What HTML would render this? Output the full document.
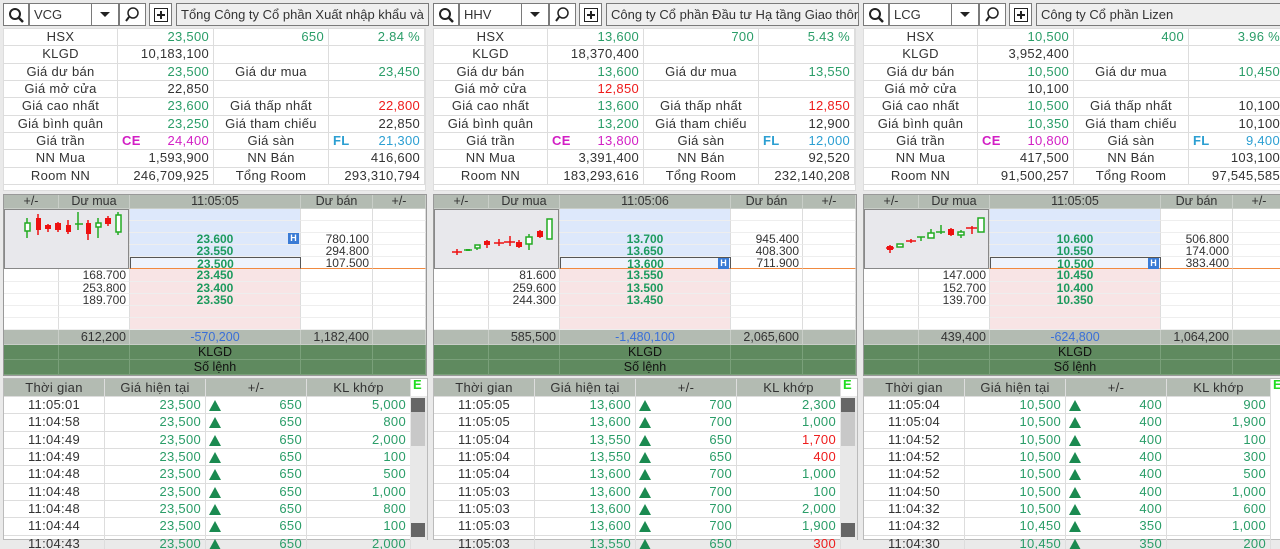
<!DOCTYPE html>
<html><head><meta charset="utf-8"><style>
*{box-sizing:border-box;margin:0;padding:0}
body{width:1280px;height:549px;overflow:hidden;background:#eaeaea;font-family:"Liberation Sans",sans-serif;font-size:13px;color:#333;position:relative}
.p{position:absolute;top:0;width:430px;height:549px;overflow:hidden}
.tb{position:absolute;top:3px;left:3px;height:23px;width:426px}
.tb>div{position:absolute;top:0;height:23px;border:1px solid #7a7a7a;background:#fff}
.tb svg{display:block;margin:3px auto 0}
.info{position:absolute;left:3px;top:28px;width:423px;height:163px;background:#fff;border:1px solid #ddd;display:grid;grid-template-columns:114px 96px 115px 96px;grid-template-rows:repeat(9,17.33px);align-content:start}
.info div{border-right:1px solid #ddd;border-bottom:1px solid #ddd;line-height:16px;padding:0 4px;white-space:nowrap;overflow:hidden;font-size:13px;letter-spacing:.3px}
.c{text-align:center}.r{text-align:right}
.g{color:#2a9d68}.rd{color:#ee1c1c}.m{color:#d21fc4}.b{color:#2c9fd2}
.ob{position:absolute;left:3px;top:194px;width:424px;height:182px;background:#fff;border:1px solid #999;display:grid;grid-template-columns:55px 71px 171px 72px 53px;grid-template-rows:14px repeat(10,12.1px) 15px 15px 15px}
.ob div{border-right:1px solid #ddd;border-bottom:1px solid #eee;line-height:12px;padding:0 3px;white-space:nowrap;font-size:12px}
.ob .h{background:#b3bbb2;text-align:center;border-color:#c9cec8;line-height:13px;font-size:12.5px}
.ob .t{background:#b3bbb2;text-align:right;line-height:15px;border-color:#c9cec8;font-size:12.5px}
.ob .k{background:#5f8a5f;text-align:center;line-height:15px;color:#111;border-color:#7aa07a;font-size:12.5px}
.sp{background:#dde8fb;text-align:center;font-weight:bold;color:#1d9a5e}
.bp{background:#f8e4e5;text-align:center;font-weight:bold;color:#1d9a5e}
.ol{border-bottom:1px solid #f08a40 !important}
.hb{position:absolute;right:1px;top:0;width:11px;height:11px;background:#3a7bd5;color:#fff;font-size:9px;line-height:11px;text-align:center;font-weight:bold}
.tr{position:absolute;left:3px;top:378px;width:425px;height:162px;background:#fff;border:1px solid #bbb;display:grid;grid-template-columns:101px 101px 101px 104px;grid-template-rows:18px repeat(9,17.33px)}
.tr div{border-right:1px solid #ddd;border-bottom:1px solid #ddd;line-height:16px;padding:0 4px;white-space:nowrap;overflow:hidden;font-size:13px;letter-spacing:.3px}
.tr .h{background:#b3bbb2;text-align:center;line-height:17px}
.ar{position:relative}
.ar:before{content:"";position:absolute;left:3px;top:3px;border-left:6px solid transparent;border-right:6px solid transparent;border-bottom:11px solid #1a8a50}
.sb{position:absolute;left:410px;top:396px;width:17px;height:144px;background:#e8e8e8}
.sb .u{position:absolute;left:1px;top:2px;width:14px;height:14px;background:#666}
.sb .d{position:absolute;left:1px;bottom:3px;width:14px;height:14px;background:#666}
.sb .th{position:absolute;left:1px;top:16px;width:14px;height:34px;background:#c8c8c8}
.E{position:absolute;left:413px;top:377px;color:#22dd22;font-weight:bold;font-size:13px}
.ch{position:absolute;left:4px;top:209px;width:125px;height:60px;background:#e8e8ec;border:1px solid #888}
</style></head><body>

<!-- PANEL 1 -->
<div class="p" style="left:0">
<div class="tb">
<div style="left:0;width:26px"><svg width="16" height="16"><circle cx="7" cy="7" r="5" fill="none" stroke="#222" stroke-width="2"/><line x1="10.5" y1="10.5" x2="15" y2="15" stroke="#222" stroke-width="2.5"/></svg></div>
<div style="left:26px;width:63px;padding-left:4px;line-height:21px">VCG</div>
<div style="left:88px;width:28px"><svg width="14" height="14"><polygon points="2,5 12,5 7,10" fill="#222"/></svg></div>
<div style="left:116px;width:27px"><svg width="16" height="16"><circle cx="8" cy="6" r="5" fill="none" stroke="#222" stroke-width="1.5"/><line x1="4" y1="10" x2="1" y2="14" stroke="#222" stroke-width="2"/></svg></div>
<div style="left:146px;width:23px"><svg width="16" height="16"><rect x="1.5" y="1.5" width="13" height="13" fill="none" stroke="#222"/><line x1="8" y1="4" x2="8" y2="12" stroke="#222" stroke-width="2"/><line x1="4" y1="8" x2="12" y2="8" stroke="#222" stroke-width="2"/></svg></div>
<div style="left:173px;width:253px;background:#efefef;padding-left:4px;line-height:21px;white-space:nowrap;overflow:hidden">Tổng Công ty Cổ phần Xuất nhập khẩu và Xây dựng Việt Nam</div>
</div>
<div class="info">
<div class="c">HSX</div><div class="r g">23,500</div><div class="r g">650</div><div class="r g">2.84 %</div>
<div class="c">KLGD</div><div class="r">10,183,100</div><div></div><div></div>
<div class="c">Giá dư bán</div><div class="r g">23,500</div><div class="c">Giá dư mua</div><div class="r g">23,450</div>
<div class="c">Giá mở cửa</div><div class="r">22,850</div><div></div><div></div>
<div class="c">Giá cao nhất</div><div class="r g">23,600</div><div class="c">Giá thấp nhất</div><div class="r rd">22,800</div>
<div class="c">Giá bình quân</div><div class="r g">23,250</div><div class="c">Giá tham chiếu</div><div class="r">22,850</div>
<div class="c">Giá trần</div><div class="r m"><b style="float:left">CE</b>24,400</div><div class="c">Giá sàn</div><div class="r b"><b style="float:left">FL</b>21,300</div>
<div class="c">NN Mua</div><div class="r">1,593,900</div><div class="c">NN Bán</div><div class="r">416,600</div>
<div class="c">Room NN</div><div class="r">246,709,925</div><div class="c">Tổng Room</div><div class="r">293,310,794</div>
</div>
<div class="ob">
<div class="h">+/-</div><div class="h">Dư mua</div><div class="h">11:05:05</div><div class="h">Dư bán</div><div class="h">+/-</div>
<div></div><div></div><div class="sp"></div><div></div><div></div>
<div></div><div></div><div class="sp"></div><div></div><div></div>
<div></div><div></div><div class="sp" style="position:relative">23.600<span class="hb">H</span></div><div class="r">780.100</div><div></div>
<div></div><div></div><div class="sp">23.550</div><div class="r">294.800</div><div></div>
<div class="ol"></div><div class="ol"></div><div class="sp ol" style="border:1px solid #555;background:#eef3fc">23.500</div><div class="r ol">107.500</div><div class="ol"></div>
<div></div><div class="r">168.700</div><div class="bp">23.450</div><div></div><div></div>
<div></div><div class="r">253.800</div><div class="bp">23.400</div><div></div><div></div>
<div></div><div class="r">189.700</div><div class="bp">23.350</div><div></div><div></div>
<div></div><div></div><div class="bp"></div><div></div><div></div>
<div></div><div></div><div class="bp"></div><div></div><div></div>
<div class="t"></div><div class="t">612,200</div><div class="t" style="text-align:center;color:#3a6fd8">-570,200</div><div class="t">1,182,400</div><div class="t"></div>
<div class="k"></div><div class="k"></div><div class="k">KLGD</div><div class="k"></div><div class="k"></div>
<div class="k"></div><div class="k"></div><div class="k">Số lệnh</div><div class="k"></div><div class="k"></div>
</div>
<div class="ch"><svg width="125" height="60"><g stroke-width="1.5">
<line x1="22" y1="8" x2="22" y2="28" stroke="#2a2"/><rect x="20" y="13" width="5" height="8" fill="#fff" stroke="#2a2"/>
<line x1="33" y1="4" x2="33" y2="25" stroke="#e11"/><rect x="31" y="8" width="5" height="12" fill="#e11"/>
<line x1="43" y1="14" x2="43" y2="22" stroke="#e11"/><rect x="40" y="15" width="6" height="4" fill="#e11"/>
<line x1="53" y1="12" x2="53" y2="22" stroke="#e11"/><rect x="50" y="13" width="6" height="7" fill="#e11"/>
<line x1="63" y1="10" x2="63" y2="24" stroke="#e11"/><rect x="61" y="15" width="5" height="7" fill="#e11"/>
<line x1="73" y1="2" x2="73" y2="20" stroke="#2a2"/><line x1="70" y1="14" x2="78" y2="14" stroke="#2a2"/>
<line x1="83" y1="10" x2="83" y2="30" stroke="#e11"/><rect x="81" y="13" width="5" height="11" fill="#e11"/>
<line x1="93" y1="8" x2="93" y2="28" stroke="#2a2"/><rect x="91" y="13" width="5" height="4" fill="#fff" stroke="#2a2"/>
<line x1="103" y1="6" x2="103" y2="16" stroke="#e11"/><rect x="100" y="8" width="6" height="6" fill="#e11"/>
<line x1="113" y1="2" x2="113" y2="25" stroke="#2a2"/><rect x="111" y="5" width="5" height="17" fill="#fff" stroke="#2a2"/>
</g></svg></div>
<div class="tr">
<div class="h">Thời gian</div><div class="h">Giá hiện tại</div><div class="h">+/-</div><div class="h">KL khớp</div>
<div class="c">11:05:01</div><div class="r g">23,500</div><div class="r g ar">650</div><div class="r g">5,000</div>
<div class="c">11:04:58</div><div class="r g">23,500</div><div class="r g ar">650</div><div class="r g">800</div>
<div class="c">11:04:49</div><div class="r g">23,500</div><div class="r g ar">650</div><div class="r g">2,000</div>
<div class="c">11:04:49</div><div class="r g">23,500</div><div class="r g ar">650</div><div class="r g">100</div>
<div class="c">11:04:48</div><div class="r g">23,500</div><div class="r g ar">650</div><div class="r g">500</div>
<div class="c">11:04:48</div><div class="r g">23,500</div><div class="r g ar">650</div><div class="r g">1,000</div>
<div class="c">11:04:48</div><div class="r g">23,500</div><div class="r g ar">650</div><div class="r g">800</div>
<div class="c">11:04:44</div><div class="r g">23,500</div><div class="r g ar">650</div><div class="r g">100</div>
<div class="c">11:04:43</div><div class="r g">23,500</div><div class="r g ar">650</div><div class="r g">2,000</div>
</div>
<div class="E">E</div>
<div class="sb"><div class="u"></div><div class="th"></div><div class="d"></div></div>
</div>

<!-- PANEL 2 -->
<div class="p" style="left:430px">
<div class="tb">
<div style="left:0;width:26px"><svg width="16" height="16"><circle cx="7" cy="7" r="5" fill="none" stroke="#222" stroke-width="2"/><line x1="10.5" y1="10.5" x2="15" y2="15" stroke="#222" stroke-width="2.5"/></svg></div>
<div style="left:26px;width:63px;padding-left:4px;line-height:21px">HHV</div>
<div style="left:88px;width:28px"><svg width="14" height="14"><polygon points="2,5 12,5 7,10" fill="#222"/></svg></div>
<div style="left:116px;width:27px"><svg width="16" height="16"><circle cx="8" cy="6" r="5" fill="none" stroke="#222" stroke-width="1.5"/><line x1="4" y1="10" x2="1" y2="14" stroke="#222" stroke-width="2"/></svg></div>
<div style="left:146px;width:23px"><svg width="16" height="16"><rect x="1.5" y="1.5" width="13" height="13" fill="none" stroke="#222"/><line x1="8" y1="4" x2="8" y2="12" stroke="#222" stroke-width="2"/><line x1="4" y1="8" x2="12" y2="8" stroke="#222" stroke-width="2"/></svg></div>
<div style="left:173px;width:253px;background:#efefef;padding-left:4px;line-height:21px;white-space:nowrap;overflow:hidden">Công ty Cổ phần Đầu tư Hạ tầng Giao thông Đèo Cả</div>
</div>
<div class="info">
<div class="c">HSX</div><div class="r g">13,600</div><div class="r g">700</div><div class="r g">5.43 %</div>
<div class="c">KLGD</div><div class="r">18,370,400</div><div></div><div></div>
<div class="c">Giá dư bán</div><div class="r g">13,600</div><div class="c">Giá dư mua</div><div class="r g">13,550</div>
<div class="c">Giá mở cửa</div><div class="r rd">12,850</div><div></div><div></div>
<div class="c">Giá cao nhất</div><div class="r g">13,600</div><div class="c">Giá thấp nhất</div><div class="r rd">12,850</div>
<div class="c">Giá bình quân</div><div class="r g">13,200</div><div class="c">Giá tham chiếu</div><div class="r">12,900</div>
<div class="c">Giá trần</div><div class="r m"><b style="float:left">CE</b>13,800</div><div class="c">Giá sàn</div><div class="r b"><b style="float:left">FL</b>12,000</div>
<div class="c">NN Mua</div><div class="r">3,391,400</div><div class="c">NN Bán</div><div class="r">92,520</div>
<div class="c">Room NN</div><div class="r">183,293,616</div><div class="c">Tổng Room</div><div class="r">232,140,208</div>
</div>
<div class="ob">
<div class="h">+/-</div><div class="h">Dư mua</div><div class="h">11:05:06</div><div class="h">Dư bán</div><div class="h">+/-</div>
<div></div><div></div><div class="sp"></div><div></div><div></div>
<div></div><div></div><div class="sp"></div><div></div><div></div>
<div></div><div></div><div class="sp">13.700</div><div class="r">945.400</div><div></div>
<div></div><div></div><div class="sp">13.650</div><div class="r">408.300</div><div></div>
<div class="ol"></div><div class="ol"></div><div class="sp ol" style="border:1px solid #555;background:#eef3fc;position:relative">13.600<span class="hb">H</span></div><div class="r ol">711.900</div><div class="ol"></div>
<div></div><div class="r">81.600</div><div class="bp">13.550</div><div></div><div></div>
<div></div><div class="r">259.600</div><div class="bp">13.500</div><div></div><div></div>
<div></div><div class="r">244.300</div><div class="bp">13.450</div><div></div><div></div>
<div></div><div></div><div class="bp"></div><div></div><div></div>
<div></div><div></div><div class="bp"></div><div></div><div></div>
<div class="t"></div><div class="t">585,500</div><div class="t" style="text-align:center;color:#3a6fd8">-1,480,100</div><div class="t">2,065,600</div><div class="t"></div>
<div class="k"></div><div class="k"></div><div class="k">KLGD</div><div class="k"></div><div class="k"></div>
<div class="k"></div><div class="k"></div><div class="k">Số lệnh</div><div class="k"></div><div class="k"></div>
</div>
<div class="ch"><svg width="125" height="60"><g stroke-width="1.5">
<line x1="17" y1="42" x2="27" y2="42" stroke="#e11"/><line x1="22" y1="39" x2="22" y2="45" stroke="#e11"/>
<line x1="29" y1="40" x2="37" y2="40" stroke="#2a2"/><rect x="31" y="39" width="4" height="2" fill="#2a2"/>
<rect x="40" y="35" width="5" height="3" fill="#fff" stroke="#2a2"/><line x1="42" y1="38" x2="42" y2="40" stroke="#2a2"/>
<line x1="52" y1="30" x2="52" y2="38" stroke="#e11"/><rect x="49" y="31" width="6" height="4" fill="#e11"/>
<line x1="59" y1="33" x2="69" y2="33" stroke="#e11"/><line x1="64" y1="29" x2="64" y2="36" stroke="#e11"/>
<line x1="69" y1="32" x2="80" y2="32" stroke="#e11"/><line x1="75" y1="26" x2="75" y2="36" stroke="#e11"/>
<line x1="84" y1="30" x2="84" y2="38" stroke="#e11"/><rect x="81" y="32" width="6" height="5" fill="#e11"/>
<line x1="94" y1="24" x2="94" y2="40" stroke="#2a2"/><rect x="91" y="27" width="6" height="7" fill="#fff" stroke="#2a2"/>
<line x1="105" y1="20" x2="105" y2="28" stroke="#e11"/><rect x="102" y="21" width="6" height="6" fill="#e11"/>
<rect x="112" y="9" width="5" height="20" fill="#fff" stroke="#2a2"/>
</g></svg></div>
<div class="tr">
<div class="h">Thời gian</div><div class="h">Giá hiện tại</div><div class="h">+/-</div><div class="h">KL khớp</div>
<div class="c">11:05:05</div><div class="r g">13,600</div><div class="r g ar">700</div><div class="r g">2,300</div>
<div class="c">11:05:05</div><div class="r g">13,600</div><div class="r g ar">700</div><div class="r g">1,000</div>
<div class="c">11:05:04</div><div class="r g">13,550</div><div class="r g ar">650</div><div class="r rd">1,700</div>
<div class="c">11:05:04</div><div class="r g">13,550</div><div class="r g ar">650</div><div class="r rd">400</div>
<div class="c">11:05:04</div><div class="r g">13,600</div><div class="r g ar">700</div><div class="r g">1,000</div>
<div class="c">11:05:03</div><div class="r g">13,600</div><div class="r g ar">700</div><div class="r g">100</div>
<div class="c">11:05:03</div><div class="r g">13,600</div><div class="r g ar">700</div><div class="r g">2,000</div>
<div class="c">11:05:03</div><div class="r g">13,600</div><div class="r g ar">700</div><div class="r g">1,900</div>
<div class="c">11:05:03</div><div class="r g">13,550</div><div class="r g ar">650</div><div class="r rd">300</div>
</div>
<div class="E">E</div>
<div class="sb"><div class="u"></div><div class="th"></div><div class="d"></div></div>
</div>

<!-- PANEL 3 -->
<div class="p" style="left:860px">
<div class="tb">
<div style="left:0;width:26px"><svg width="16" height="16"><circle cx="7" cy="7" r="5" fill="none" stroke="#222" stroke-width="2"/><line x1="10.5" y1="10.5" x2="15" y2="15" stroke="#222" stroke-width="2.5"/></svg></div>
<div style="left:26px;width:63px;padding-left:4px;line-height:21px">LCG</div>
<div style="left:88px;width:28px"><svg width="14" height="14"><polygon points="2,5 12,5 7,10" fill="#222"/></svg></div>
<div style="left:116px;width:27px"><svg width="16" height="16"><circle cx="8" cy="6" r="5" fill="none" stroke="#222" stroke-width="1.5"/><line x1="4" y1="10" x2="1" y2="14" stroke="#222" stroke-width="2"/></svg></div>
<div style="left:146px;width:23px"><svg width="16" height="16"><rect x="1.5" y="1.5" width="13" height="13" fill="none" stroke="#222"/><line x1="8" y1="4" x2="8" y2="12" stroke="#222" stroke-width="2"/><line x1="4" y1="8" x2="12" y2="8" stroke="#222" stroke-width="2"/></svg></div>
<div style="left:173px;width:253px;background:#efefef;padding-left:4px;line-height:21px;white-space:nowrap;overflow:hidden">Công ty Cổ phần Lizen</div>
</div>
<div class="info">
<div class="c">HSX</div><div class="r g">10,500</div><div class="r g">400</div><div class="r g">3.96 %</div>
<div class="c">KLGD</div><div class="r">3,952,400</div><div></div><div></div>
<div class="c">Giá dư bán</div><div class="r g">10,500</div><div class="c">Giá dư mua</div><div class="r g">10,450</div>
<div class="c">Giá mở cửa</div><div class="r">10,100</div><div></div><div></div>
<div class="c">Giá cao nhất</div><div class="r g">10,500</div><div class="c">Giá thấp nhất</div><div class="r">10,100</div>
<div class="c">Giá bình quân</div><div class="r g">10,350</div><div class="c">Giá tham chiếu</div><div class="r">10,100</div>
<div class="c">Giá trần</div><div class="r m"><b style="float:left">CE</b>10,800</div><div class="c">Giá sàn</div><div class="r b"><b style="float:left">FL</b>9,400</div>
<div class="c">NN Mua</div><div class="r">417,500</div><div class="c">NN Bán</div><div class="r">103,100</div>
<div class="c">Room NN</div><div class="r">91,500,257</div><div class="c">Tổng Room</div><div class="r">97,545,585</div>
</div>
<div class="ob">
<div class="h">+/-</div><div class="h">Dư mua</div><div class="h">11:05:05</div><div class="h">Dư bán</div><div class="h">+/-</div>
<div></div><div></div><div class="sp"></div><div></div><div></div>
<div></div><div></div><div class="sp"></div><div></div><div></div>
<div></div><div></div><div class="sp">10.600</div><div class="r">506.800</div><div></div>
<div></div><div></div><div class="sp">10.550</div><div class="r">174.000</div><div></div>
<div class="ol"></div><div class="ol"></div><div class="sp ol" style="border:1px solid #555;background:#eef3fc;position:relative">10.500<span class="hb">H</span></div><div class="r ol">383.400</div><div class="ol"></div>
<div></div><div class="r">147.000</div><div class="bp">10.450</div><div></div><div></div>
<div></div><div class="r">152.700</div><div class="bp">10.400</div><div></div><div></div>
<div></div><div class="r">139.700</div><div class="bp">10.350</div><div></div><div></div>
<div></div><div></div><div class="bp"></div><div></div><div></div>
<div></div><div></div><div class="bp"></div><div></div><div></div>
<div class="t"></div><div class="t">439,400</div><div class="t" style="text-align:center;color:#3a6fd8">-624,800</div><div class="t">1,064,200</div><div class="t"></div>
<div class="k"></div><div class="k"></div><div class="k">KLGD</div><div class="k"></div><div class="k"></div>
<div class="k"></div><div class="k"></div><div class="k">Số lệnh</div><div class="k"></div><div class="k"></div>
</div>
<div class="ch"><svg width="125" height="60"><g stroke-width="1.5">
<line x1="21" y1="38" x2="29" y2="38" stroke="#e11"/><line x1="25" y1="35" x2="25" y2="43" stroke="#e11"/><rect x="22" y="36" width="6" height="4" fill="#e11"/>
<rect x="32" y="34" width="6" height="3" fill="#fff" stroke="#2a2"/>
<line x1="41" y1="31" x2="51" y2="31" stroke="#e11"/><line x1="46" y1="29" x2="46" y2="33" stroke="#e11"/>
<line x1="52" y1="27" x2="60" y2="27" stroke="#2a2"/><line x1="56" y1="27" x2="56" y2="31" stroke="#2a2"/>
<line x1="66" y1="19" x2="66" y2="28" stroke="#2a2"/><rect x="63" y="23" width="6" height="5" fill="#fff" stroke="#2a2"/>
<line x1="71" y1="22" x2="80" y2="22" stroke="#2a2"/><line x1="76" y1="15" x2="76" y2="24" stroke="#2a2"/>
<line x1="86" y1="18" x2="86" y2="26" stroke="#e11"/><rect x="83" y="19" width="6" height="6" fill="#e11"/>
<line x1="96" y1="20" x2="96" y2="28" stroke="#2a2"/><rect x="93" y="22" width="6" height="3" fill="#fff" stroke="#2a2"/>
<line x1="101" y1="18" x2="112" y2="18" stroke="#e11"/><line x1="107" y1="16" x2="107" y2="24" stroke="#e11"/>
<rect x="113" y="8" width="6" height="14" fill="#fff" stroke="#2a2"/>
</g></svg></div>
<div class="tr">
<div class="h">Thời gian</div><div class="h">Giá hiện tại</div><div class="h">+/-</div><div class="h">KL khớp</div>
<div class="c">11:05:04</div><div class="r g">10,500</div><div class="r g ar">400</div><div class="r g">900</div>
<div class="c">11:05:04</div><div class="r g">10,500</div><div class="r g ar">400</div><div class="r g">1,900</div>
<div class="c">11:04:52</div><div class="r g">10,500</div><div class="r g ar">400</div><div class="r g">100</div>
<div class="c">11:04:52</div><div class="r g">10,500</div><div class="r g ar">400</div><div class="r g">300</div>
<div class="c">11:04:52</div><div class="r g">10,500</div><div class="r g ar">400</div><div class="r g">500</div>
<div class="c">11:04:50</div><div class="r g">10,500</div><div class="r g ar">400</div><div class="r g">1,000</div>
<div class="c">11:04:32</div><div class="r g">10,500</div><div class="r g ar">400</div><div class="r g">600</div>
<div class="c">11:04:32</div><div class="r g">10,450</div><div class="r g ar">350</div><div class="r g">1,000</div>
<div class="c">11:04:30</div><div class="r g">10,450</div><div class="r g ar">350</div><div class="r g">200</div>
</div>
<div class="E">E</div>
</div>
</body></html>
